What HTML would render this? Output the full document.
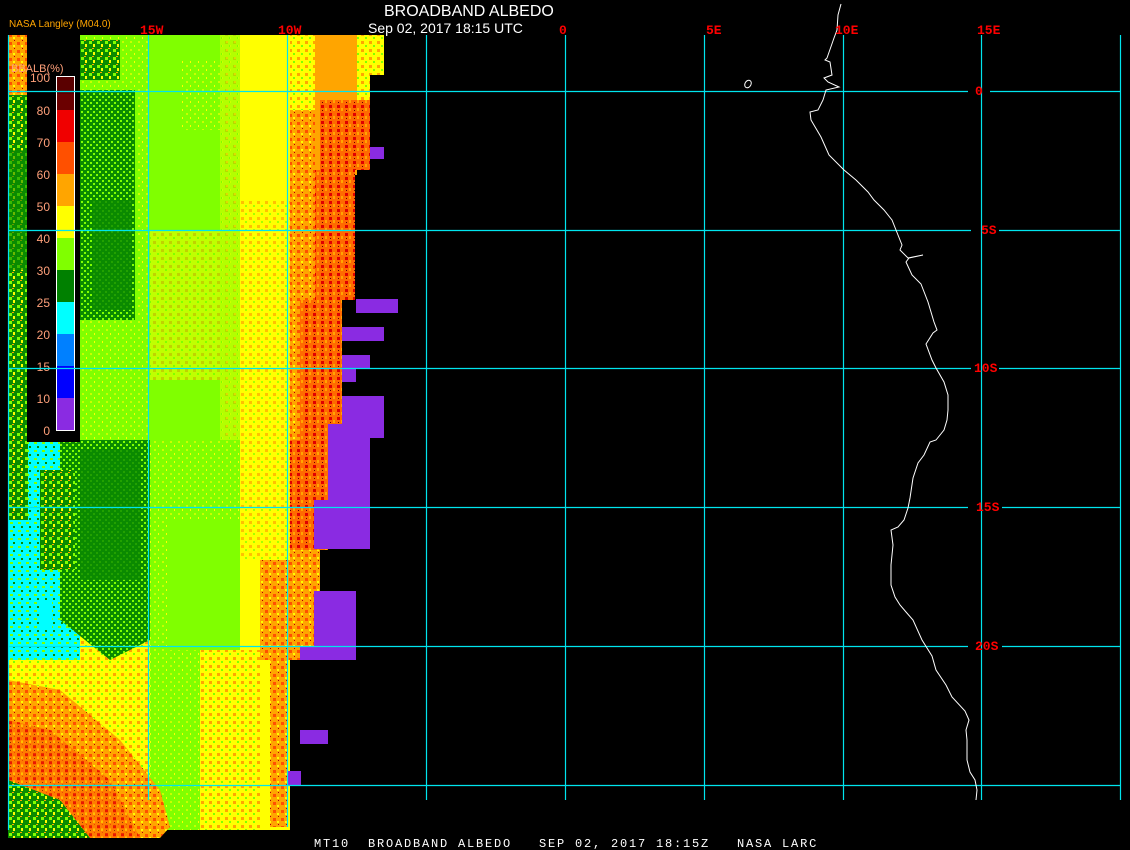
<!DOCTYPE html>
<html><head><meta charset="utf-8"><style>
html,body{margin:0;padding:0;background:#000;width:1130px;height:850px;overflow:hidden}
svg{display:block}
.t{font-family:"Liberation Sans",sans-serif}
.m{font-family:"Liberation Mono",monospace}
</style></head><body>
<svg width="1130" height="850" viewBox="0 0 1130 850" xmlns="http://www.w3.org/2000/svg">
<rect width="1130" height="850" fill="#000"/>
<defs>
<pattern id="dg" width="6" height="6" patternUnits="userSpaceOnUse"><rect width="6" height="6" fill="#0a8a00"/><rect x="0" y="0" width="2" height="2" fill="#80ff00"/><rect x="3" y="3" width="2" height="2" fill="#80ff00"/></pattern>
<pattern id="lg" width="8" height="8" patternUnits="userSpaceOnUse"><rect width="8" height="8" fill="#80ff00"/><rect x="2" y="1" width="2" height="2" fill="#c8ff00"/><rect x="6" y="5" width="1" height="2" fill="#ffff00"/></pattern>
<pattern id="yo" width="8" height="8" patternUnits="userSpaceOnUse"><rect width="8" height="8" fill="#ffff00"/><rect x="1" y="1" width="3" height="3" fill="#ffa500"/><rect x="5" y="5" width="2" height="2" fill="#80ff00"/></pattern>
<pattern id="or" width="8" height="8" patternUnits="userSpaceOnUse"><rect width="8" height="8" fill="#ffa500"/><rect x="1" y="2" width="3" height="3" fill="#ff5000"/><rect x="5" y="5" width="2" height="2" fill="#ffff00"/><rect x="6" y="0" width="1" height="1" fill="#b00000"/></pattern>
<pattern id="rd" width="8" height="8" patternUnits="userSpaceOnUse"><rect width="8" height="8" fill="#ff6a00"/><rect x="1" y="1" width="3" height="3" fill="#e00000"/><rect x="5" y="4" width="2" height="3" fill="#ffa500"/><rect x="2" y="6" width="1" height="1" fill="#600000"/></pattern>
<pattern id="cy" width="8" height="8" patternUnits="userSpaceOnUse"><rect width="8" height="8" fill="#00ffff"/><rect x="2" y="2" width="3" height="2" fill="#80ff00"/><rect x="5" y="6" width="2" height="2" fill="#0a8a00"/></pattern>
<pattern id="mx" width="8" height="8" patternUnits="userSpaceOnUse"><rect width="8" height="8" fill="#0a8a00"/><rect x="1" y="1" width="3" height="3" fill="#80ff00"/><rect x="5" y="4" width="2" height="3" fill="#ffff00"/><rect x="4" y="0" width="2" height="1" fill="#ffa500"/></pattern>
</defs>
<polygon fill="url(#yo)" points="8,35 384,35 384,75 370,75 370,170 355,170 355,300 342,300 342,440 328,440 328,550 315,550 315,590 300,590 300,650 287,650 287,827 160,827 160,838 8,838"/>
<rect x="8" y="35" width="19" height="60" fill="url(#or)"/>
<rect x="8" y="95" width="19" height="345" fill="url(#mx)"/>
<rect x="8" y="150" width="19" height="120" fill="#0a8a00" opacity=".6"/>
<rect x="80" y="35" width="70" height="415" fill="url(#lg)"/>
<rect x="80" y="90" width="55" height="230" fill="url(#dg)"/>
<rect x="80" y="40" width="40" height="40" fill="url(#mx)"/>
<rect x="92" y="200" width="40" height="110" fill="#0a8a00" opacity=".8"/>
<rect x="150" y="35" width="70" height="415" fill="#80ff00"/>
<rect x="180" y="60" width="40" height="70" fill="url(#lg)"/>
<rect x="150" y="230" width="70" height="150" fill="url(#yo)" opacity=".5"/>
<rect x="220" y="35" width="20" height="415" fill="url(#lg)" opacity=".6"/>
<rect x="240" y="35" width="50" height="795" fill="#ffff00"/>
<rect x="290" y="35" width="30" height="260" fill="url(#yo)"/>
<rect x="290" y="110" width="30" height="540" fill="url(#or)"/>
<rect x="315" y="35" width="42" height="140" fill="#ffa500"/>
<rect x="320" y="100" width="50" height="70" fill="url(#rd)"/>
<rect x="315" y="170" width="40" height="130" fill="url(#rd)"/>
<rect x="300" y="300" width="42" height="140" fill="url(#rd)"/>
<rect x="290" y="440" width="38" height="110" fill="url(#rd)"/>
<rect x="240" y="200" width="50" height="360" fill="url(#yo)" opacity=".7"/>
<rect x="260" y="560" width="40" height="100" fill="url(#or)"/>
<rect x="270" y="660" width="17" height="167" fill="url(#or)"/>
<rect x="8" y="440" width="72" height="220" fill="url(#cy)"/>
<rect x="8" y="440" width="20" height="80" fill="url(#mx)"/>
<rect x="40" y="600" width="12" height="30" fill="#00ffff"/>
<polygon fill="url(#dg)" points="60,440 150,440 150,640 110,660 60,620"/>
<rect x="80" y="450" width="60" height="130" fill="#0a8a00" opacity=".8"/>
<rect x="40" y="470" width="35" height="100" fill="url(#mx)"/>
<rect x="150" y="440" width="90" height="390" fill="url(#lg)"/>
<rect x="170" y="520" width="70" height="130" fill="#80ff00"/>
<rect x="200" y="650" width="60" height="180" fill="url(#yo)"/>
<polygon fill="url(#or)" points="8,680 60,690 120,740 160,790 170,827 160,838 8,838"/>
<polygon fill="url(#rd)" points="8,720 50,730 110,780 140,838 8,838" opacity=".7"/>
<polygon fill="url(#mx)" points="8,780 60,800 90,838 8,838"/>
<g fill="#8a2be2">
<rect x="370" y="147" width="14" height="12"/>
<rect x="356" y="299" width="42" height="14"/>
<rect x="342" y="327" width="42" height="14"/>
<rect x="342" y="355" width="28" height="14"/>
<rect x="342" y="369" width="14" height="13"/>
<rect x="342" y="396" width="42" height="42"/>
<rect x="328" y="424" width="42" height="76"/>
<rect x="314" y="500" width="56" height="49"/>
<rect x="314" y="591" width="42" height="69"/>
<rect x="300" y="646" width="56" height="14"/>
<rect x="300" y="730" width="28" height="14"/>
<rect x="287" y="771" width="14" height="14"/>
</g>
<rect x="27" y="35" width="53" height="407" fill="#000"/>
<g>
<rect x="57" y="77" width="17" height="17" fill="#5a0000"/>
<rect x="57" y="94" width="17" height="16" fill="#6b0000"/>
<rect x="57" y="110" width="17" height="32" fill="#f00000"/>
<rect x="57" y="142" width="17" height="32" fill="#ff5000"/>
<rect x="57" y="174" width="17" height="32" fill="#ffa500"/>
<rect x="57" y="206" width="17" height="32" fill="#ffff00"/>
<rect x="57" y="238" width="17" height="32" fill="#80ff00"/>
<rect x="57" y="270" width="17" height="32" fill="#008000"/>
<rect x="57" y="302" width="17" height="32" fill="#00ffff"/>
<rect x="57" y="334" width="17" height="32" fill="#0080ff"/>
<rect x="57" y="366" width="17" height="32" fill="#0000ff"/>
<rect x="57" y="398" width="17" height="32" fill="#8a2be2"/>
<rect x="56.5" y="76.5" width="18" height="354" fill="none" stroke="#fff" stroke-width="1"/>
</g>
<g class="t" fill="#ffa07a" font-size="12" text-anchor="end">
<text x="50" y="82">100</text><text x="50" y="115">80</text><text x="50" y="147">70</text>
<text x="50" y="179">60</text><text x="50" y="211">50</text><text x="50" y="243">40</text>
<text x="50" y="275">30</text><text x="50" y="307">25</text><text x="50" y="339">20</text>
<text x="50" y="371">15</text><text x="50" y="403">10</text><text x="50" y="435">0</text>
</g>
<text class="t" x="11" y="72" fill="#ffa07a" font-size="11">BBALB(%)</text>
<g stroke="#00e5ee" stroke-width="1.2">
<line x1="8.5" y1="35" x2="8.5" y2="830"/>
<line x1="148.5" y1="35" x2="148.5" y2="800"/>
<line x1="287.5" y1="35" x2="287.5" y2="827"/>
<line x1="426.5" y1="35" x2="426.5" y2="800"/>
<line x1="565.5" y1="35" x2="565.5" y2="800"/>
<line x1="704.5" y1="35" x2="704.5" y2="800"/>
<line x1="843.5" y1="35" x2="843.5" y2="800"/>
<line x1="981.5" y1="35" x2="981.5" y2="800"/>
<line x1="1120.5" y1="35" x2="1120.5" y2="800"/>
<line x1="8" y1="91.5" x2="968" y2="91.5"/><line x1="990" y1="91.5" x2="1120" y2="91.5"/>
<line x1="8" y1="230.5" x2="971" y2="230.5"/><line x1="999" y1="230.5" x2="1120" y2="230.5"/>
<line x1="8" y1="368.5" x2="971" y2="368.5"/><line x1="999" y1="368.5" x2="1120" y2="368.5"/>
<line x1="8" y1="507.5" x2="968" y2="507.5"/><line x1="1002" y1="507.5" x2="1120" y2="507.5"/>
<line x1="8" y1="646.5" x2="968" y2="646.5"/><line x1="1002" y1="646.5" x2="1120" y2="646.5"/>
<line x1="8" y1="785.5" x2="1120" y2="785.5"/>
</g>
<polyline fill="none" stroke="#fff" stroke-width="1" points="841,4 838,15 837,30 834,38 827,58 825,60 830,62 832,75 824,78 828,82 839,87 826,90 823,100 818,110 810,112 811,120 821,137 829,155 844,170 856,180 868,192 874,200 884,210 892,220 896,230 902,245 900,250 908,258 923,255 909,258 906,262 912,275 921,284 928,302 934,322 937,330 933,333 926,344 932,360 936,368 944,382 948,395 948,410 947,420 944,430 936,440 930,442 924,455 918,463 913,478 910,498 908,508 904,520 898,527 891,530 893,545 891,565 891,585 895,597 900,605 906,612 913,620 922,640 927,648 932,656 936,670 946,685 952,697 965,711 969,720 966,730 967,740 967,760 970,772 975,780 977,790 976,800"/>
<ellipse cx="748" cy="84" rx="3" ry="4" transform="rotate(30 748 84)" fill="none" stroke="#fff" stroke-width="1"/>
<g class="m" fill="#f00" font-size="13" font-weight="bold">
<text x="140" y="34">15W</text><text x="278" y="34">10W</text><text x="559" y="34">0</text>
<text x="706" y="34">5E</text><text x="835" y="34">10E</text><text x="977" y="34">15E</text>
<text x="975" y="95">0</text><text x="981" y="234">5S</text><text x="974" y="372">10S</text>
<text x="976" y="511">15S</text><text x="975" y="650">20S</text>
</g>
<text class="t" x="384" y="16" fill="#fff" font-size="16">BROADBAND ALBEDO</text>
<text class="t" x="368" y="33" fill="#fff" font-size="14">Sep 02, 2017 18:15 UTC</text>
<text class="t" x="9" y="27" fill="#ffa500" font-size="10">NASA Langley (M04.0)</text>
<text class="m" x="314" y="847" fill="#fff" font-size="12" letter-spacing="1.8" xml:space="preserve">MT10  BROADBAND ALBEDO   SEP 02, 2017 18:15Z   NASA LARC</text>
</svg>
</body></html>
